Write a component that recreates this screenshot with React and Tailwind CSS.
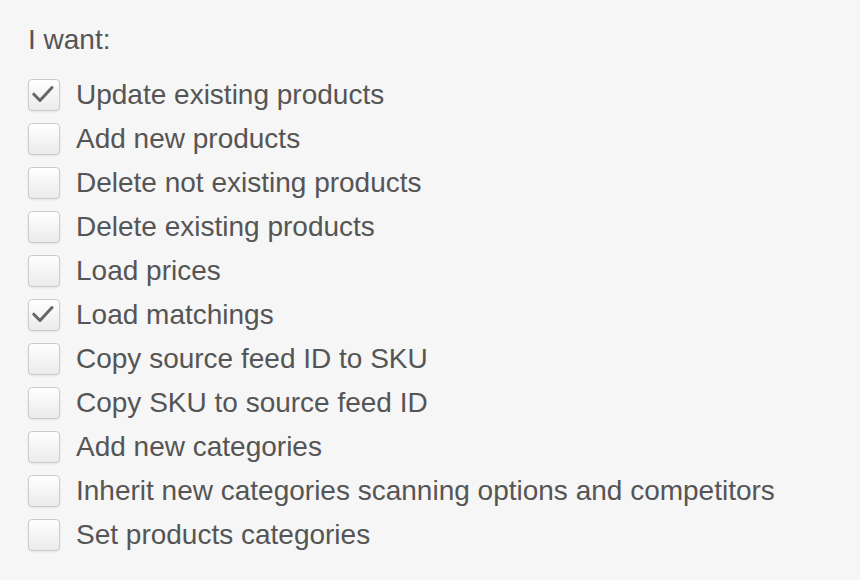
import React from 'react';

const options = [
  { label: 'Update existing products', checked: true },
  { label: 'Add new products', checked: false },
  { label: 'Delete not existing products', checked: false },
  { label: 'Delete existing products', checked: false },
  { label: 'Load prices', checked: false },
  { label: 'Load matchings', checked: true },
  { label: 'Copy source feed ID to SKU', checked: false },
  { label: 'Copy SKU to source feed ID', checked: false },
  { label: 'Add new categories', checked: false },
  { label: 'Inherit new categories scanning options and competitors', checked: false },
  { label: 'Set products categories', checked: false },
];

const Checkbox = ({ checked }) => (
  <span className="w-[32px] h-[32px] flex-shrink-0 rounded-[4px] border border-[#cbcbcb] bg-gradient-to-b from-white to-[#ebebeb] shadow-[0_1px_2px_rgba(0,0,0,0.08)] flex items-center justify-center">
    {checked && (
      <svg width="24" height="24" viewBox="0 0 24 24" fill="none">
        <path d="M1.8 11.2 L8 17.5 L20 4.5" stroke="#666" strokeWidth="3" strokeLinecap="round" strokeLinejoin="round" />
      </svg>
    )}
  </span>
);

const App = () => {
  return (
    <div className="w-[860px] h-[580px] bg-[#f6f6f6] px-[28px] pt-[24px] font-[family-name:'Liberation_Sans',Arial,sans-serif] text-[#555]">
      <h2 className="text-[28px] leading-[32px] font-normal mb-[17px]">I want:</h2>

      <div className="flex flex-col">
        {options.map((opt) => (
          <label key={opt.label} className="h-[44px] flex items-center gap-[16px]">
            <Checkbox checked={opt.checked} />
            <span className="text-[28px] leading-[32px]">{opt.label}</span>
          </label>
        ))}
      </div>
    </div>
  );
};

export default App;
